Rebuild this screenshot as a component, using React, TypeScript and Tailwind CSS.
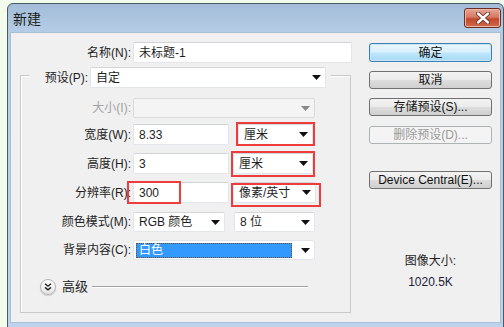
import React from "react"

function Arrow({ muted }: { muted?: boolean }) {
  return (
    <svg width="9" height="5" viewBox="0 0 9 5" className="shrink-0">
      <path d="M0 0h9L4.5 5z" fill={muted ? "#8a8a8a" : "#111"} />
    </svg>
  )
}

function Select({
  className,
  children,
  disabled,
}: {
  className: string
  children?: React.ReactNode
  disabled?: boolean
}) {
  return (
    <div
      className={`flex items-center justify-between rounded-[2px] border pl-[5px] pr-[4px] ${
        disabled
          ? "border-[#d9d9d9] bg-[#f4f4f4]"
          : "border-[#e2e6ea] border-t-[#d2d6da] bg-white"
      } ${className}`}
    >
      <div className="flex-1 truncate">{children}</div>
      <Arrow muted={disabled} />
    </div>
  )
}

function TextBox({ className, value }: { className: string; value: string }) {
  return (
    <div
      className={`flex items-center rounded-[2px] border border-[#e2e6ea] border-t-[#cfd4d9] bg-white pl-[5px] ${className}`}
    >
      {value}
    </div>
  )
}

function Btn({
  children,
  className,
  primary,
  disabled,
}: {
  children: React.ReactNode
  className?: string
  primary?: boolean
  disabled?: boolean
}) {
  let look =
    "border-[#707070] bg-[linear-gradient(#f3f3f3_0%,#ebebeb_48%,#dddddd_52%,#cfcfcf_100%)] text-[#111]"
  if (primary)
    look =
      "border-[#3c7fb1] bg-[linear-gradient(#eaf6fd_0%,#d9f0fc_48%,#bee6fd_52%,#a7d9f5_100%)] text-[#111] shadow-[inset_0_0_0_1px_#c8e6f8]"
  if (disabled) look = "border-[#adb2b5] bg-[#f4f4f4] text-[#9a9a9a]"
  return (
    <div
      className={`flex h-[18px] w-[123px] items-center justify-center rounded-[3px] border leading-none ${look} ${className ?? ""}`}
    >
      {children}
    </div>
  )
}

function Red({ className }: { className: string }) {
  return (
    <div
      className={`pointer-events-none absolute border-2 border-[#ee3b3b] ${className}`}
    />
  )
}

function Label({ children, disabled }: { children: React.ReactNode; disabled?: boolean }) {
  return (
    <div
      className={`w-[110px] shrink-0 text-right ${disabled ? "text-[#a3a3a3]" : "text-[#1e1e1e]"}`}
    >
      {children}
    </div>
  )
}

export default function App() {
  return (
    <div className="h-[327px] w-[504px] overflow-hidden bg-[#f3fbec] pl-[7px] pt-[3px] font-['Liberation_Sans','Noto_Sans_CJK_SC',sans-serif] text-[12px] leading-[16px] text-[#1e1e1e]">
      <div className="flex h-[332px] w-[497px] flex-col rounded-t-[6px] border border-[#4b5967] bg-[linear-gradient(#a3bdd8,#b6cde6_30px,#bcd3ec)]">
        {/* title bar */}
        <div className="flex h-[28px] shrink-0 items-start justify-between pl-[5px] pr-[2px]">
          <div className="mt-[7px] text-[14px] leading-[16px] text-[#1b1b1b]">
            新建
          </div>
          <div className="mt-[4px] flex h-[20px] w-[37px] items-center justify-center rounded-[3px] border border-[#6e2c22] bg-[linear-gradient(#e6a595_0%,#d67a62_45%,#c2472c_55%,#cf6a4c_100%)] shadow-[inset_0_0_0_1px_#eab8a8]">
            <svg width="14" height="12" viewBox="0 0 14 12">
              <path
                d="M2 1.5l10 9M12 1.5l-10 9"
                stroke="#5a2a22"
                strokeWidth="4"
                strokeLinecap="round"
              />
              <path
                d="M2 1.5l10 9M12 1.5l-10 9"
                stroke="#fff"
                strokeWidth="2.4"
                strokeLinecap="round"
              />
            </svg>
          </div>
        </div>

        {/* client area */}
        <div className="mx-[2px] flex h-[291px] shrink-0 border border-[#a9bfd6] bg-[#f0f0f0]">
          {/* left side */}
          <div className="w-[358px] shrink-0">
            <div className="mt-[9px] flex items-center">
              <div className="w-[120px] text-right">名称(N):</div>
              <TextBox className="ml-[2px] h-[21px] w-[219px]" value="未标题-1" />
            </div>

            {/* preset group */}
            <div className="ml-[9px] mt-[12px] h-[238px] w-[331px] border border-[#c9c9c9] shadow-[inset_1px_1px_0_#fff]">
              <div className="-mt-[9px] ml-[8px] flex w-[302px] items-center bg-[#f0f0f0]">
                <div className="w-[59px] text-right">预设(P):</div>
                <Select className="ml-[2px] h-[21px] w-[236px]">自定</Select>
              </div>

              <div className="mt-[10px] flex items-center">
                <Label disabled>大小(I):</Label>
                <Select disabled className="ml-[2px] h-[20px] w-[182px]" />
              </div>

              <div className="mt-[6px] flex items-center">
                <Label>宽度(W):</Label>
                <TextBox className="ml-[2px] h-[21px] w-[96px]" value="8.33" />
                <div className="relative ml-[9px]">
                  <Select className="h-[21px] w-[75px]">厘米</Select>
                  <Red className="-bottom-[1px] -left-[2px] -right-[2px] -top-[2px]" />
                </div>
              </div>

              <div className="mt-[8px] flex items-center">
                <Label>高度(H):</Label>
                <TextBox className="ml-[2px] h-[21px] w-[96px]" value="3" />
                <div className="relative ml-[4px]">
                  <Select className="h-[21px] w-[80px]">厘米</Select>
                  <Red className="-bottom-[3px] -left-[2px] -right-[2px] -top-[2px]" />
                </div>
              </div>

              <div className="mt-[8px] flex items-center">
                <Label>分辨率(R):</Label>
                <div className="relative ml-[2px]">
                  <TextBox className="h-[21px] w-[96px]" value="300" />
                  <Red className="-bottom-[1px] -left-[6px] -top-[1px] w-[54px]" />
                </div>
                <div className="relative ml-[4px]">
                  <Select className="h-[21px] w-[83px]">像素/英寸</Select>
                  <Red className="-bottom-[4px] -left-[2px] -right-[5px] top-[1px]" />
                </div>
              </div>

              <div className="mt-[9px] flex items-center">
                <Label>颜色模式(M):</Label>
                <Select className="ml-[2px] h-[20px] w-[92px]">RGB 颜色</Select>
                <Select className="ml-[9px] h-[20px] w-[81px]">8 位</Select>
              </div>

              <div className="mt-[8px] flex items-center">
                <Label>背景内容(C):</Label>
                <div className="ml-[2px] flex h-[20px] w-[182px] items-center rounded-[2px] border border-[#e2e6ea] bg-white pl-[2px] pr-[4px]">
                  <div className="mr-[9px] flex h-[15px] flex-1 items-center border border-dotted border-[#6b4a2a] bg-[#3399ff] pl-[2px] text-white">
                    白色
                  </div>
                  <Arrow />
                </div>
              </div>

              <div className="ml-[19px] mt-[19px] flex items-center">
                <div className="flex h-[16px] w-[16px] items-center justify-center rounded-full border border-[#b4b4b4] bg-[linear-gradient(#ffffff,#e4e4e4)] shadow-[0_1px_1px_#c8c8c8]">
                  <svg width="8" height="8" viewBox="0 0 8 8">
                    <path
                      d="M1 0.8l3 2.4 3-2.4M1 4.4l3 2.4 3-2.4"
                      fill="none"
                      stroke="#222"
                      strokeWidth="1.4"
                    />
                  </svg>
                </div>
                <div className="ml-[6px] text-[13px]">高级</div>
                <div className="ml-[4px] h-[2px] w-[216px] border-t border-[#a0a0a0] bg-white" />
              </div>
            </div>
          </div>

          {/* right side */}
          <div className="flex w-[123px] shrink-0 flex-col">
            <Btn primary className="mt-[10px] h-[19px]">
              确定
            </Btn>
            <Btn className="mt-[9px]">取消</Btn>
            <Btn className="mt-[9px]">存储预设(S)...</Btn>
            <Btn disabled className="mt-[10px]">
              删除预设(D)...
            </Btn>
            <Btn className="mt-[27px]">Device Central(E)...</Btn>
            <div className="mt-[64px] text-center">图像大小:</div>
            <div className="mt-[5px] text-center text-[#1c1c3a]">1020.5K</div>
          </div>
        </div>
      </div>
    </div>
  )
}
